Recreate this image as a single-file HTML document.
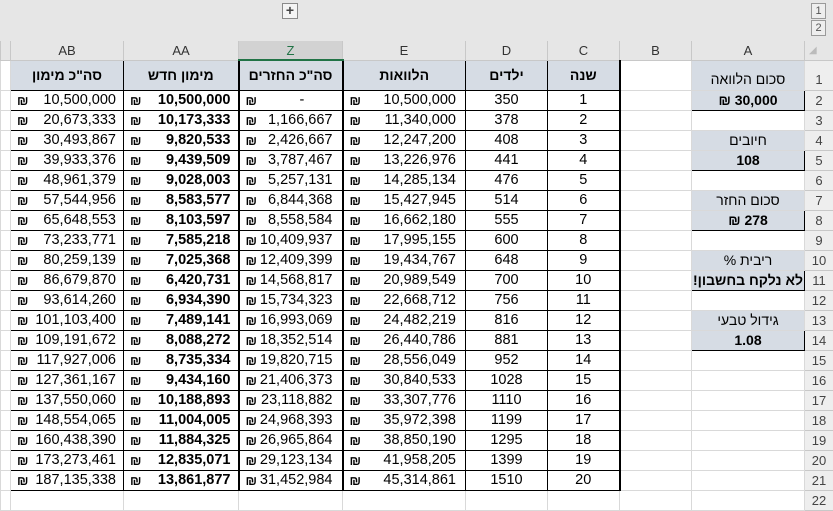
<!DOCTYPE html>
<html><head><meta charset="utf-8">
<style>
*{margin:0;padding:0;box-sizing:border-box}
body{width:833px;height:500px;overflow:hidden;background:#e6e6e6;font-family:"Liberation Sans",Arial,sans-serif;font-size:14px;color:#000;position:relative}
.plus{position:absolute;left:282px;top:3px;width:16px;height:16px;border:1px solid #8a8a8a;background:#f4f4f4;font-size:14px;line-height:13px;text-align:center;color:#444;font-weight:bold}
.ol{position:absolute;left:811px;width:15px;height:16px;border:1px solid #9a9a9a;font-size:11px;line-height:14px;text-align:center;color:#555;background:#eee}
table{position:absolute;left:0;top:41px;border-collapse:collapse;table-layout:fixed;width:833px;background:#fff}
td{border:1px solid #d9d9d9;height:20px;padding:0 4px;white-space:nowrap;overflow:hidden;line-height:17px}
tr{height:20px}
tr.ch td{height:19px;background:#e6e6e6;text-align:center;color:#333;font-size:13px;border-color:#c8c8c8;border-top:none}
tr.ch{height:19px}
tr.ch td.sel{background:#d2d2d2;color:#217346;border-bottom:2px solid #217346}
tr.r1,tr.r1 td{height:30px}
td.rh{background:#eeeeee;color:#444;text-align:center;font-size:13px;border-color:#c8c8c8;padding:0;line-height:17px}
tr.r1 td.rh{vertical-align:bottom;padding-bottom:2px}
td.b{border:1px solid #000}
td.h{background:#d6dce4;font-weight:bold;text-align:center;direction:rtl;border:1px solid #000}
td.n{text-align:right;padding-right:7px;padding-left:6px;font-size:14.5px}
td.tl.n{padding-right:9px}
td.c{text-align:center;font-size:14.5px}
td.bo{font-weight:bold}
.s{float:left;font-size:13px;font-weight:bold;line-height:17px;height:17px;overflow:hidden;display:block}
.tl{border-left:2px solid #000 !important}
.tr2{border-right:2px solid #000 !important}
td.al{background:#d6dce4;text-align:center;direction:rtl}
tr.r1 td.al{vertical-align:bottom;padding-bottom:2px}
td.av{background:#d6dce4;text-align:center;font-weight:bold;border:1px solid #000;direction:rtl}
</style></head><body>
<div class="plus">+</div>
<div class="ol" style="top:3px">1</div>
<div class="ol" style="top:20px">2</div>
<table>
<colgroup><col style="width:10px"><col style="width:113px"><col style="width:115px"><col style="width:104px"><col style="width:123px"><col style="width:82px"><col style="width:72px"><col style="width:72px"><col style="width:113px"><col style="width:29px"></colgroup>
<tr class="ch"><td></td><td>AB</td><td>AA</td><td class="sel">Z</td><td>E</td><td>D</td><td>C</td><td>B</td><td>A</td><td style="font-size:10px;color:#bbb;text-align:left">◢</td></tr>
<tr class="r1"><td></td><td class="h">סה"כ מימון</td><td class="h">מימון חדש</td><td class="h tl">סה"כ החזרים</td><td class="h tl">הלוואות</td><td class="h">ילדים</td><td class="h tr2">שנה</td><td></td><td class="al">סכום הלוואה</td><td class="rh">1</td></tr>
<tr><td></td><td class="b n"><span class="s">₪</span>10,500,000</td><td class="b n bo"><span class="s">₪</span>10,500,000</td><td class="b n tl"><span class="s">₪</span>-&nbsp;&nbsp;&nbsp;&nbsp;&nbsp;&nbsp;&nbsp;</td><td class="b n tl"><span class="s">₪</span>10,500,000</td><td class="b c">350</td><td class="b c tr2">1</td><td></td><td class="av">30,000 ₪</td><td class="rh">2</td></tr>
<tr><td></td><td class="b n"><span class="s">₪</span>20,673,333</td><td class="b n bo"><span class="s">₪</span>10,173,333</td><td class="b n tl"><span class="s">₪</span>1,166,667</td><td class="b n tl"><span class="s">₪</span>11,340,000</td><td class="b c">378</td><td class="b c tr2">2</td><td></td><td></td><td class="rh">3</td></tr>
<tr><td></td><td class="b n"><span class="s">₪</span>30,493,867</td><td class="b n bo"><span class="s">₪</span>9,820,533</td><td class="b n tl"><span class="s">₪</span>2,426,667</td><td class="b n tl"><span class="s">₪</span>12,247,200</td><td class="b c">408</td><td class="b c tr2">3</td><td></td><td class="al">חיובים</td><td class="rh">4</td></tr>
<tr><td></td><td class="b n"><span class="s">₪</span>39,933,376</td><td class="b n bo"><span class="s">₪</span>9,439,509</td><td class="b n tl"><span class="s">₪</span>3,787,467</td><td class="b n tl"><span class="s">₪</span>13,226,976</td><td class="b c">441</td><td class="b c tr2">4</td><td></td><td class="av">108</td><td class="rh">5</td></tr>
<tr><td></td><td class="b n"><span class="s">₪</span>48,961,379</td><td class="b n bo"><span class="s">₪</span>9,028,003</td><td class="b n tl"><span class="s">₪</span>5,257,131</td><td class="b n tl"><span class="s">₪</span>14,285,134</td><td class="b c">476</td><td class="b c tr2">5</td><td></td><td></td><td class="rh">6</td></tr>
<tr><td></td><td class="b n"><span class="s">₪</span>57,544,956</td><td class="b n bo"><span class="s">₪</span>8,583,577</td><td class="b n tl"><span class="s">₪</span>6,844,368</td><td class="b n tl"><span class="s">₪</span>15,427,945</td><td class="b c">514</td><td class="b c tr2">6</td><td></td><td class="al">סכום החזר</td><td class="rh">7</td></tr>
<tr><td></td><td class="b n"><span class="s">₪</span>65,648,553</td><td class="b n bo"><span class="s">₪</span>8,103,597</td><td class="b n tl"><span class="s">₪</span>8,558,584</td><td class="b n tl"><span class="s">₪</span>16,662,180</td><td class="b c">555</td><td class="b c tr2">7</td><td></td><td class="av">278 ₪</td><td class="rh">8</td></tr>
<tr><td></td><td class="b n"><span class="s">₪</span>73,233,771</td><td class="b n bo"><span class="s">₪</span>7,585,218</td><td class="b n tl"><span class="s">₪</span>10,409,937</td><td class="b n tl"><span class="s">₪</span>17,995,155</td><td class="b c">600</td><td class="b c tr2">8</td><td></td><td></td><td class="rh">9</td></tr>
<tr><td></td><td class="b n"><span class="s">₪</span>80,259,139</td><td class="b n bo"><span class="s">₪</span>7,025,368</td><td class="b n tl"><span class="s">₪</span>12,409,399</td><td class="b n tl"><span class="s">₪</span>19,434,767</td><td class="b c">648</td><td class="b c tr2">9</td><td></td><td class="al">ריבית %</td><td class="rh">10</td></tr>
<tr><td></td><td class="b n"><span class="s">₪</span>86,679,870</td><td class="b n bo"><span class="s">₪</span>6,420,731</td><td class="b n tl"><span class="s">₪</span>14,568,817</td><td class="b n tl"><span class="s">₪</span>20,989,549</td><td class="b c">700</td><td class="b c tr2">10</td><td></td><td class="av" style="padding:0;overflow:visible">לא נלקח בחשבון!</td><td class="rh">11</td></tr>
<tr><td></td><td class="b n"><span class="s">₪</span>93,614,260</td><td class="b n bo"><span class="s">₪</span>6,934,390</td><td class="b n tl"><span class="s">₪</span>15,734,323</td><td class="b n tl"><span class="s">₪</span>22,668,712</td><td class="b c">756</td><td class="b c tr2">11</td><td></td><td></td><td class="rh">12</td></tr>
<tr><td></td><td class="b n"><span class="s">₪</span>101,103,400</td><td class="b n bo"><span class="s">₪</span>7,489,141</td><td class="b n tl"><span class="s">₪</span>16,993,069</td><td class="b n tl"><span class="s">₪</span>24,482,219</td><td class="b c">816</td><td class="b c tr2">12</td><td></td><td class="al">גידול טבעי</td><td class="rh">13</td></tr>
<tr><td></td><td class="b n"><span class="s">₪</span>109,191,672</td><td class="b n bo"><span class="s">₪</span>8,088,272</td><td class="b n tl"><span class="s">₪</span>18,352,514</td><td class="b n tl"><span class="s">₪</span>26,440,786</td><td class="b c">881</td><td class="b c tr2">13</td><td></td><td class="av">1.08</td><td class="rh">14</td></tr>
<tr><td></td><td class="b n"><span class="s">₪</span>117,927,006</td><td class="b n bo"><span class="s">₪</span>8,735,334</td><td class="b n tl"><span class="s">₪</span>19,820,715</td><td class="b n tl"><span class="s">₪</span>28,556,049</td><td class="b c">952</td><td class="b c tr2">14</td><td></td><td></td><td class="rh">15</td></tr>
<tr><td></td><td class="b n"><span class="s">₪</span>127,361,167</td><td class="b n bo"><span class="s">₪</span>9,434,160</td><td class="b n tl"><span class="s">₪</span>21,406,373</td><td class="b n tl"><span class="s">₪</span>30,840,533</td><td class="b c">1028</td><td class="b c tr2">15</td><td></td><td></td><td class="rh">16</td></tr>
<tr><td></td><td class="b n"><span class="s">₪</span>137,550,060</td><td class="b n bo"><span class="s">₪</span>10,188,893</td><td class="b n tl"><span class="s">₪</span>23,118,882</td><td class="b n tl"><span class="s">₪</span>33,307,776</td><td class="b c">1110</td><td class="b c tr2">16</td><td></td><td></td><td class="rh">17</td></tr>
<tr><td></td><td class="b n"><span class="s">₪</span>148,554,065</td><td class="b n bo"><span class="s">₪</span>11,004,005</td><td class="b n tl"><span class="s">₪</span>24,968,393</td><td class="b n tl"><span class="s">₪</span>35,972,398</td><td class="b c">1199</td><td class="b c tr2">17</td><td></td><td></td><td class="rh">18</td></tr>
<tr><td></td><td class="b n"><span class="s">₪</span>160,438,390</td><td class="b n bo"><span class="s">₪</span>11,884,325</td><td class="b n tl"><span class="s">₪</span>26,965,864</td><td class="b n tl"><span class="s">₪</span>38,850,190</td><td class="b c">1295</td><td class="b c tr2">18</td><td></td><td></td><td class="rh">19</td></tr>
<tr><td></td><td class="b n"><span class="s">₪</span>173,273,461</td><td class="b n bo"><span class="s">₪</span>12,835,071</td><td class="b n tl"><span class="s">₪</span>29,123,134</td><td class="b n tl"><span class="s">₪</span>41,958,205</td><td class="b c">1399</td><td class="b c tr2">19</td><td></td><td></td><td class="rh">20</td></tr>
<tr><td></td><td class="b n"><span class="s">₪</span>187,135,338</td><td class="b n bo"><span class="s">₪</span>13,861,877</td><td class="b n tl"><span class="s">₪</span>31,452,984</td><td class="b n tl"><span class="s">₪</span>45,314,861</td><td class="b c">1510</td><td class="b c tr2">20</td><td></td><td></td><td class="rh">21</td></tr>
<tr><td></td><td></td><td></td><td></td><td></td><td></td><td></td><td></td><td></td><td class="rh">22</td></tr>
</table>
</body></html>
